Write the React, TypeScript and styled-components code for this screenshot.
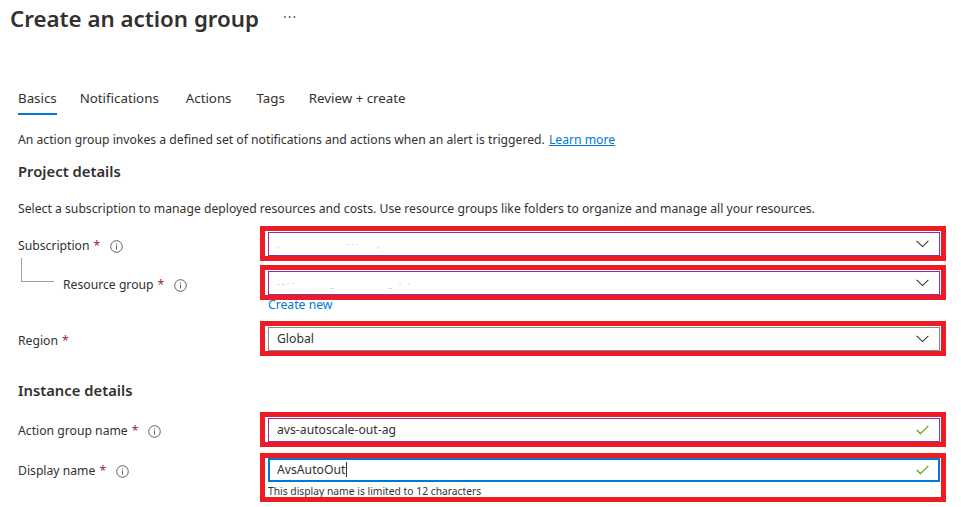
import React from "react";
import styled, { createGlobalStyle } from "styled-components";

const GlobalStyle = createGlobalStyle`
  html, body { margin: 0; padding: 0; background: #ffffff; }
  body {
    font-family: "Noto Sans", "Open Sans", sans-serif;
    color: #323130;
    -webkit-font-smoothing: antialiased;
  }
`;

const Page = styled.div`
  width: 961px;
  height: 507px;
  overflow: hidden;
  background: #fff;
  display: flex;
  flex-direction: column;
`;

const Header = styled.div`
  height: 38px;
  display: flex;
  align-items: center;
  padding-left: 10px;
  gap: 24px;
`;

const Title = styled.h1`
  margin: 0;
  font-size: 22.3px;
  font-weight: 600;
  line-height: 30px;
  color: #323130;
`;

const More = styled.span`
  font-size: 14px;
  color: #605e5c;
  letter-spacing: 1px;
  line-height: 14px;
  padding-bottom: 4px;
`;

const Content = styled.div`
  padding-left: 18px;
  display: flex;
  flex-direction: column;
`;

const Tabs = styled.div`
  margin-top: 47px;
  display: flex;
`;

const Tab = styled.div<{ $active?: boolean; $gap: number }>`
  font-size: 13.3px;
  line-height: 26px;
  padding-bottom: 2px;
  margin-right: ${(p) => p.$gap}px;
  border-bottom: 2px solid ${(p) => (p.$active ? "#0078d4" : "transparent")};
  color: #323130;
`;

const Paragraph = styled.p<{ $mt: number }>`
  margin: ${(p) => p.$mt}px 0 0;
  font-size: 12.2px;
  line-height: 18px;
  white-space: nowrap;
`;

const Link = styled.a`
  color: #0078d4;
  text-decoration: underline;
  margin-left: 4px;
  cursor: pointer;
`;

const SectionTitle = styled.h2<{ $mt: number }>`
  margin: ${(p) => p.$mt}px 0 0;
  font-size: 14.8px;
  font-weight: 600;
  line-height: 22px;
`;

const FormRow = styled.div<{ $mt: number }>`
  margin-top: ${(p) => p.$mt}px;
  display: grid;
  grid-template-columns: 242px 686px;
  align-items: start;
`;

const LabelCell = styled.div<{ $indent?: boolean; $pt?: number }>`
  position: relative;
  display: flex;
  align-items: center;
  padding-top: ${(p) => p.$pt ?? 11}px;
  padding-left: ${(p) => (p.$indent ? 45 : 0)}px;
  height: 18px;
  font-size: 12.2px;
  line-height: 18px;
  white-space: nowrap;
`;

const TreeLine = styled.span`
  position: absolute;
  left: 3px;
  top: -7px;
  width: 32px;
  height: 23px;
  border-left: 1px solid #a19f9d;
  border-bottom: 1px solid #a19f9d;
`;

const Required = styled.span`
  color: #a4262c;
  margin-left: 4px;
`;

const InfoWrap = styled.span`
  display: inline-flex;
  margin-left: 10px;
`;

const FieldCol = styled.div`
  display: flex;
  flex-direction: column;
`;

const Annotation = styled.div<{ $pt?: number }>`
  border: 5px solid #ed1c24;
  padding: ${(p) => p.$pt ?? 1}px 1px 0 3px;
  width: 672px;
`;

type Tone = "purple" | "gray" | "blue";
const toneColor: Record<Tone, string> = {
  purple: "#8b2fa5",
  gray: "#8a8886",
  blue: "#0078d4",
};

const Field = styled.div<{ $tone: Tone }>`
  box-sizing: border-box;
  height: 24px;
  border: ${(p) => (p.$tone === "blue" ? 2 : 1)}px solid ${(p) => toneColor[p.$tone]};
  display: flex;
  align-items: center;
  padding: 0 ${(p) => (p.$tone === "blue" ? 9 : 10)}px 0 ${(p) => (p.$tone === "blue" ? 7 : 8)}px;
  font-size: 12.2px;
  color: #323130;
  background: #fff;
`;

const FieldText = styled.span`
  flex: 1;
  white-space: nowrap;
  line-height: 18px;
`;

const Caret = styled.span`
  display: inline-block;
  width: 1px;
  height: 15px;
  background: #323130;
  vertical-align: -3px;
  margin-left: 1px;
`;

const Specks = styled.span`
  color: #c8c6c4;
  font-size: 9px;
  letter-spacing: 2px;
`;

const CreateNew = styled.a`
  display: block;
  margin: -1px 0 0 8px;
  font-size: 12.2px;
  line-height: 12px;
  color: #0078d4;
  cursor: pointer;
`;

const Helper = styled.div`
  font-size: 10.3px;
  line-height: 12px;
  padding-top: 3px;
  height: 12px;
  overflow: hidden;
  color: #323130;
  white-space: nowrap;
`;

const InfoIcon = () => (
  <svg width="13" height="13" viewBox="0 0 13 13" fill="none">
    <circle cx="6.5" cy="6.5" r="5.8" stroke="#605e5c" strokeWidth="1" />
    <rect x="6" y="5.5" width="1" height="4" fill="#605e5c" />
    <rect x="6" y="3.4" width="1" height="1.1" fill="#605e5c" />
  </svg>
);

const Chevron = () => (
  <svg width="13" height="8" viewBox="0 0 13 8" fill="none">
    <path d="M0.6 0.8 L6.5 6.6 L12.4 0.8" stroke="#323130" strokeWidth="1.1" />
  </svg>
);

const Check = () => (
  <svg width="13" height="10" viewBox="0 0 13 10" fill="none">
    <path d="M0.8 5 L4.5 8.7 L12.3 0.9" stroke="#57a300" strokeWidth="1.2" />
  </svg>
);

const tabs = [
  { label: "Basics", gap: 23, active: true },
  { label: "Notifications", gap: 27 },
  { label: "Actions", gap: 25 },
  { label: "Tags", gap: 24 },
  { label: "Review + create", gap: 0 },
];

export default function App() {
  return (
    <>
      <GlobalStyle />
      <Page>
        <Header>
          <Title>Create an action group</Title>
          <More>···</More>
        </Header>
        <Content>
          <Tabs>
            {tabs.map((t) => (
              <Tab key={t.label} $active={t.active} $gap={t.gap}>
                {t.label}
              </Tab>
            ))}
          </Tabs>
          <Paragraph $mt={16}>
            An action group invokes a defined set of notifications and actions when an alert is triggered.
            <Link>Learn more</Link>
          </Paragraph>
          <SectionTitle $mt={11}>Project details</SectionTitle>
          <Paragraph $mt={18}>
            Select a subscription to manage deployed resources and costs. Use resource groups like folders to organize and
            manage all your resources.
          </Paragraph>

          <FormRow $mt={8}>
            <LabelCell>
              Subscription<Required>*</Required>
              <InfoWrap><InfoIcon /></InfoWrap>
            </LabelCell>
            <FieldCol>
              <Annotation>
                <Field $tone="purple">
                  <FieldText><Specks>,&nbsp;&nbsp;&nbsp;&nbsp;&nbsp;&nbsp;&nbsp;&nbsp;&nbsp;&nbsp;&nbsp;&nbsp;&nbsp;&nbsp;&nbsp;··· &nbsp;&nbsp;&nbsp;,</Specks></FieldText>
                  <Chevron />
                </Field>
              </Annotation>
            </FieldCol>
          </FormRow>

          <FormRow $mt={4}>
            <LabelCell $indent>
              <TreeLine />
              Resource group<Required>*</Required>
              <InfoWrap><InfoIcon /></InfoWrap>
            </LabelCell>
            <FieldCol>
              <Annotation>
                <Field $tone="purple">
                  <FieldText><Specks>--··&nbsp;&nbsp;&nbsp;&nbsp;&nbsp;&nbsp;&nbsp;&nbsp;_&nbsp;&nbsp;&nbsp;&nbsp;&nbsp;&nbsp;&nbsp;&nbsp;&nbsp;&nbsp;&nbsp;&nbsp;_ · ·</Specks></FieldText>
                  <Chevron />
                </Field>
              </Annotation>
              <CreateNew>Create new</CreateNew>
            </FieldCol>
          </FormRow>

          <FormRow $mt={10}>
            <LabelCell>
              Region<Required>*</Required>
            </LabelCell>
            <FieldCol>
              <Annotation>
                <Field $tone="gray">
                  <FieldText>Global</FieldText>
                  <Chevron />
                </Field>
              </Annotation>
            </FieldCol>
          </FormRow>

          <SectionTitle $mt={23}>Instance details</SectionTitle>

          <FormRow $mt={11}>
            <LabelCell $pt={10}>
              Action group name<Required>*</Required>
              <InfoWrap><InfoIcon /></InfoWrap>
            </LabelCell>
            <FieldCol>
              <Annotation>
                <Field $tone="purple">
                  <FieldText>avs-autoscale-out-ag</FieldText>
                  <Check />
                </Field>
              </Annotation>
            </FieldCol>
          </FormRow>

          <FormRow $mt={6}>
            <LabelCell $pt={9}>
              Display name<Required>*</Required>
              <InfoWrap><InfoIcon /></InfoWrap>
            </LabelCell>
            <FieldCol>
              <Annotation $pt={0}>
                <Field $tone="blue">
                  <FieldText>
                    AvsAutoOut<Caret />
                  </FieldText>
                  <Check />
                </Field>
                <Helper>This display name is limited to 12 characters</Helper>
              </Annotation>
            </FieldCol>
          </FormRow>
        </Content>
      </Page>
    </>
  );
}
